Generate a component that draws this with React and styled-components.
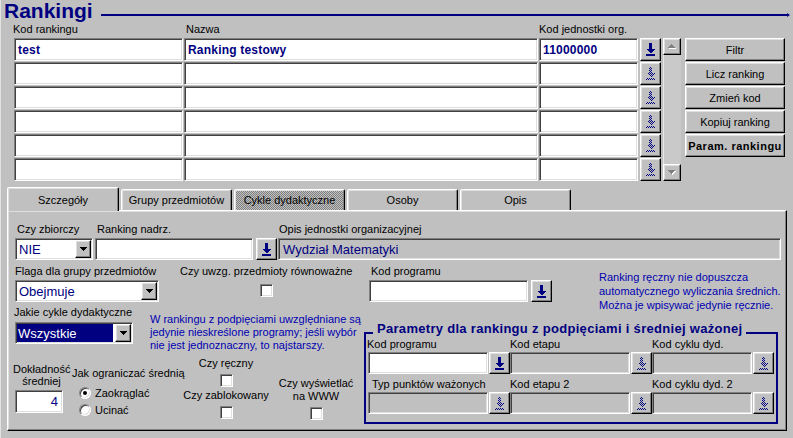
import React, { useId } from "react";
import styled, { createGlobalStyle, css } from "styled-components";

const NAVY = "#000080";
const BLUE = "#0000b0";
const FACE = "#c0c0c0";
const FONT = `"Liberation Sans", Arial, sans-serif`;

const GlobalStyle = createGlobalStyle`
  html, body { margin: 0; padding: 0; background: ${FACE}; }
  body { font-family: ${FONT}; font-size: 11px; color: #000; }
  * { box-sizing: border-box; }
`;

const raised = css`
  background: ${FACE};
  border-style: solid;
  border-width: 1px;
  border-color: #fff #000 #000 #fff;
  box-shadow: inset -1px -1px #808080, inset 1px 1px #dfdfdf;
`;

const sunken = css`
  border-style: solid;
  border-width: 1px;
  border-color: #808080 #fff #fff #808080;
  box-shadow: inset 1px 1px #404040, inset -1px -1px #dfdfdf;
`;

const Window = styled.div`
  width: 793px;
  height: 438px;
  overflow: hidden;
  background: ${FACE};
  box-shadow: inset 1px 0 #e2e2e2;
`;

/* ---------- header ---------- */
const Header = styled.header`
  display: flex;
  align-items: flex-start;
  height: 23px;
  padding-left: 4px;
`;

const Title = styled.h1`
  margin: 0;
  font: 700 21px/22px ${FONT};
  color: ${NAVY};
`;

const HeaderRule = styled.div`
  flex: 1;
  height: 2px;
  margin: 14px 6px 0 8px;
  background: ${NAVY};
  position: relative;
  &::after {
    content: "";
    position: absolute;
    right: -3px;
    top: -1px;
    border-left: 3px solid ${NAVY};
    border-top: 2px solid transparent;
    border-bottom: 2px solid transparent;
  }
`;

/* ---------- top records ---------- */
const TopSection = styled.section`
  display: flex;
  align-items: flex-start;
  padding-left: 14px;
`;

const RecordGrid = styled.div`
  display: grid;
  grid-template-columns: 169px 354px 99px 22px;
  grid-template-rows: 14px repeat(6, 23px);
  column-gap: 1px;
  row-gap: 1px;
`;

const ColLabel = styled.div`
  font-size: 11px;
  line-height: 13px;
  white-space: nowrap;
  margin-left: ${(p) => p.$ml || 0}px;
`;

const GridCell = styled.div`
  ${sunken};
  background: #fff;
  display: flex;
  align-items: center;
  padding-left: 3px;
  font: 700 12px ${FONT};
  letter-spacing: 0.2px;
  color: ${NAVY};
  white-space: nowrap;
  overflow: hidden;
`;

const ArrowBtn = styled.div`
  ${raised};
  flex: none;
  width: 21px;
  height: ${(p) => p.$h || 22}px;
  margin-left: ${(p) => p.$ml || 0}px;
  display: flex;
  align-items: center;
  justify-content: center;
`;

const ScrollBar = styled.div`
  display: flex;
  flex-direction: column;
  width: 18px;
  height: 143px;
  margin: 15px 0 0 2px;
`;

const ScrollBtn = styled.div`
  ${raised};
  height: 17px;
  display: flex;
  align-items: center;
  justify-content: center;
`;

const ScrollTrack = styled.div`
  flex: 1;
  background: #c9c9c9;
  box-shadow: inset 1px 0 #e6e6e6;
`;

const ActionColumn = styled.div`
  display: flex;
  flex-direction: column;
  gap: 1px;
  width: 100px;
  margin: 15px 0 0 4px;
`;

const ActionButton = styled.button`
  ${raised};
  appearance: none;
  height: 23px;
  width: 100px;
  padding: 0;
  font: ${(p) => (p.$bold ? 700 : 400)} 11px ${FONT};
  letter-spacing: ${(p) => (p.$bold ? "0.5px" : "0")};
  color: #000;
  cursor: default;
`;

/* ---------- tabs ---------- */
const TabsArea = styled.section`
  margin-top: 6px;
`;

const TabStrip = styled.div`
  display: flex;
  align-items: flex-end;
  height: 23px;
  padding-left: 7px;
  position: relative;
  z-index: 1;
`;

const Tab = styled.div`
  flex: none;
  width: ${(p) => (p.$active ? 112 : 111)}px;
  height: ${(p) => (p.$active ? 24 : 21)}px;
  margin-right: 2px;
  margin-bottom: ${(p) => (p.$active ? -1 : 0)}px;
  display: flex;
  align-items: center;
  justify-content: center;
  font-size: 11px;
  white-space: nowrap;
  border-style: solid;
  border-width: 1px 1px 0 1px;
  border-color: #fff #000 transparent #fff;
  border-radius: 2px 2px 0 0;
  box-shadow: inset -1px 0 #808080, inset 1px 1px #dfdfdf;
  background: ${(p) =>
    p.$dither
      ? `repeating-conic-gradient(#808080 0% 25%, ${FACE} 0% 50%) 0 0 / 2px 2px`
      : FACE};
`;

const Panel = styled.div`
  margin-left: 7px;
  width: 780px;
  height: 221px;
  border-style: solid;
  border-width: 1px;
  border-color: #fff #000 #000 #fff;
  box-shadow: inset -1px -1px #808080, inset 1px 1px #dfdfdf;
  padding: 12px 0 0 5px;
`;

/* ---------- form parts ---------- */
const Row = styled.div`
  display: flex;
  align-items: flex-start;
  margin-top: ${(p) => p.$mt || 0}px;
`;

const Field = styled.div`
  display: flex;
  flex-direction: column;
  flex: none;
  margin-left: ${(p) => p.$ml || 0}px;
  margin-top: ${(p) => p.$mt || 0}px;
  align-items: ${(p) => (p.$center ? "center" : "stretch")};
  width: ${(p) => (p.$w ? `${p.$w}px` : "auto")};
`;

const Label = styled.div`
  font-size: 11px;
  line-height: ${(p) => p.$lh || 13}px;
  white-space: nowrap;
  margin-left: ${(p) => p.$ml || 0}px;
  margin-top: ${(p) => p.$mt || 0}px;
  margin-bottom: ${(p) => (p.$mb ?? 2)}px;
  text-align: ${(p) => (p.$center ? "center" : "left")};
`;

const Combo = styled.div`
  display: flex;
  align-items: flex-start;
`;

const Input = styled.div`
  ${sunken};
  flex: none;
  width: ${(p) => p.$w}px;
  height: ${(p) => p.$h || 22}px;
  margin-left: ${(p) => p.$ml || 0}px;
  background: ${(p) => (p.$gray ? FACE : "#fff")};
  display: flex;
  align-items: center;
  justify-content: ${(p) => (p.$right ? "flex-end" : "flex-start")};
  padding: 0 4px;
  font: 400 13px ${FONT};
  color: ${NAVY};
  white-space: nowrap;
  overflow: hidden;
`;

const SelectBox = styled.div`
  ${sunken};
  flex: none;
  width: ${(p) => p.$w}px;
  height: 22px;
  margin-left: ${(p) => p.$ml || 0}px;
  background: #fff;
  padding: 1px;
  display: flex;
  align-items: stretch;
`;

const SelectValue = styled.div`
  flex: 1;
  display: flex;
  align-items: center;
  margin-right: 2px;
  padding-left: ${(p) => (p.$selected ? 1 : 2)}px;
  font: 400 13px ${FONT};
  color: ${(p) => (p.$selected ? "#fff" : NAVY)};
  background: ${(p) => (p.$selected ? NAVY : "transparent")};
  white-space: nowrap;
  overflow: hidden;
`;

const SelectBtn = styled.div`
  ${raised};
  width: 16px;
  display: flex;
  align-items: center;
  justify-content: center;
`;

const CheckBox = styled.div`
  ${sunken};
  flex: none;
  width: 13px;
  height: 13px;
  background: #fff;
`;

const RadioRow = styled.label`
  display: flex;
  align-items: center;
  height: 17px;
  margin-left: 7px;
  gap: 4px;
  font-size: 11px;
`;

const Radio = styled.span`
  flex: none;
  position: relative;
  width: 12px;
  height: 12px;
  border-radius: 50%;
  background: #fff;
  border: 1px solid;
  border-color: #808080 #fff #fff #808080;
  box-shadow: inset 1px 1px #404040, inset -1px -1px #dfdfdf;
  ${(p) =>
    p.$checked &&
    css`
      &::after {
        content: "";
        position: absolute;
        left: 3px;
        top: 3px;
        width: 4px;
        height: 4px;
        border-radius: 50%;
        background: #000;
      }
    `}
`;

const Note = styled.p`
  margin: ${(p) => p.$mt || 0}px 0 0 ${(p) => p.$ml || 0}px;
  font-size: 11px;
  line-height: ${(p) => p.$lh || 13}px;
  color: ${BLUE};
  white-space: nowrap;
`;

const Lower = styled.div`
  display: flex;
  align-items: flex-start;
`;

const LeftCol = styled.div`
  width: 350px;
  flex: none;
`;

const RightCol = styled.div`
  flex: 1;
`;

const GroupBox = styled.div`
  position: relative;
  width: 414px;
  height: 92px;
  margin: 20px 0 0 1px;
  border: 2px solid ${NAVY};
  padding: 4px 0 0 2px;
`;

const GroupTitle = styled.div`
  position: absolute;
  top: -13px;
  left: 7px;
  padding: 0 4px;
  background: ${FACE};
  font: 700 13px/15px ${FONT};
  letter-spacing: 0.3px;
  color: ${NAVY};
  white-space: nowrap;
`;

/* ---------- icons ---------- */
function DropIcon({ disabled }) {
  const id = "dither" + useId().replace(/[^a-zA-Z0-9]/g, "");
  const fill = disabled ? `url(#${id})` : NAVY;
  return (
    <svg width="9" height="13" viewBox="0 0 9 13" shapeRendering="crispEdges" aria-hidden="true">
      {disabled && (
        <defs>
          <pattern id={id} width="2" height="2" patternUnits="userSpaceOnUse">
            <rect width="1" height="1" fill={NAVY} />
            <rect x="1" y="1" width="1" height="1" fill={NAVY} />
          </pattern>
        </defs>
      )}
      <path d="M3 0h3v6h3l-4.5 4.5L0 6h3z" fill={fill} />
      <rect x="0" y="11" width="9" height="2" fill={fill} />
    </svg>
  );
}

function Caret() {
  return (
    <svg width="7" height="4" viewBox="0 0 7 4" shapeRendering="crispEdges" aria-hidden="true">
      <path d="M0 0H7V1H6V2H5V3H4V4H3V3H2V2H1V1H0Z" fill="#000" />
    </svg>
  );
}

function ScrollArrow({ down }) {
  const d = down
    ? "M0 0H7V1H6V2H5V3H4V4H3V3H2V2H1V1H0Z"
    : "M3 0H4V1H5V2H6V3H7V4H0V3H1V2H2V1H3Z";
  return (
    <svg width="8" height="5" viewBox="0 0 8 5" shapeRendering="crispEdges" aria-hidden="true">
      <path d={d} fill="#fff" transform="translate(1 1)" />
      <path d={d} fill="#808080" />
    </svg>
  );
}

function Select({ w, ml, value, selected }) {
  return (
    <SelectBox $w={w} $ml={ml}>
      <SelectValue $selected={selected}>{value}</SelectValue>
      <SelectBtn>
        <Caret />
      </SelectBtn>
    </SelectBox>
  );
}

const rows = [
  { kod: "test", nazwa: "Ranking testowy", jedn: "11000000", active: true },
  {}, {}, {}, {}, {},
];

export default function App() {
  return (
    <>
      <GlobalStyle />
      <Window>
        <Header>
          <Title>Rankingi</Title>
          <HeaderRule />
        </Header>

        <TopSection>
          <RecordGrid>
            <ColLabel $ml={-1}>Kod rankingu</ColLabel>
            <ColLabel $ml={2}>Nazwa</ColLabel>
            <ColLabel>Kod jednostki org.</ColLabel>
            <div />
            {rows.map((r, i) => (
              <React.Fragment key={i}>
                <GridCell>{r.kod}</GridCell>
                <GridCell>{r.nazwa}</GridCell>
                <GridCell>{r.jedn}</GridCell>
                <ArrowBtn $h={23} $ml={1}>
                  <DropIcon disabled={!r.active} />
                </ArrowBtn>
              </React.Fragment>
            ))}
          </RecordGrid>

          <ScrollBar>
            <ScrollBtn>
              <ScrollArrow />
            </ScrollBtn>
            <ScrollTrack />
            <ScrollBtn>
              <ScrollArrow down />
            </ScrollBtn>
          </ScrollBar>

          <ActionColumn>
            <ActionButton>Filtr</ActionButton>
            <ActionButton>Licz ranking</ActionButton>
            <ActionButton>Zmień kod</ActionButton>
            <ActionButton>Kopiuj ranking</ActionButton>
            <ActionButton $bold>Param. rankingu</ActionButton>
          </ActionColumn>
        </TopSection>

        <TabsArea>
          <TabStrip>
            <Tab $active>Szczegóły</Tab>
            <Tab>Grupy przedmiotów</Tab>
            <Tab $dither>Cykle dydaktyczne</Tab>
            <Tab>Osoby</Tab>
            <Tab>Opis</Tab>
          </TabStrip>

          <Panel>
            <Row>
              <Field $ml={2}>
                <Label $ml={2}>Czy zbiorczy</Label>
                <Select w={78} value="NIE" />
              </Field>
              <Field $ml={2}>
                <Label $ml={2}>Ranking nadrz.</Label>
                <Combo>
                  <Input $w={158} />
                  <ArrowBtn $ml={3}>
                    <DropIcon />
                  </ArrowBtn>
                </Combo>
              </Field>
              <Field $ml={1}>
                <Label $ml={1}>Opis jednostki organizacyjnej</Label>
                <Input $w={503} $gray>
                  Wydział Matematyki
                </Input>
              </Field>
            </Row>

            <Lower>
              <LeftCol>
                <Row $mt={5}>
                  <Field $ml={2}>
                    <Label>Flaga dla grupy przedmiotów</Label>
                    <Select w={144} value="Obejmuje" />
                  </Field>
                  <Field $ml={21} $center>
                    <Label $mb={6}>Czy uwzg. przedmioty równoważne</Label>
                    <CheckBox />
                  </Field>
                </Row>

                <Row $mt={4}>
                  <Field $ml={2}>
                    <Label $ml={-1} $mb={3}>Jakie cykle dydaktyczne</Label>
                    <Select w={118} value="Wszystkie" selected />
                  </Field>
                  <Note $ml={17} $mt={7}>
                    W rankingu z podpięciami uwzględniane są
                    <br />
                    jedynie nieskreślone programy; jeśli wybór
                    <br />
                    nie jest jednoznaczny, to najstarszy.
                  </Note>
                </Row>

                <Row $mt={5}>
                  <Field $w={57} $mt={6}>
                    <Label $lh={12} $center $mb={3}>
                      Dokładność
                      <br />
                      średniej
                    </Label>
                    <Input $w={48} $h={23} $ml={2} $right>
                      4
                    </Input>
                  </Field>
                  <Field $w={111} $ml={2} $mt={10}>
                    <Label $mb={4}>Jak ograniczać średnią</Label>
                    <RadioRow>
                      <Radio $checked />
                      Zaokrąglać
                    </RadioRow>
                    <RadioRow>
                      <Radio />
                      Ucinać
                    </RadioRow>
                  </Field>
                  <Field $w={86} $center>
                    <Label $mb={4}>Czy ręczny</Label>
                    <CheckBox />
                    <Label $mt={2} $mb={4}>Czy zablokowany</Label>
                    <CheckBox />
                  </Field>
                  <Field $w={80} $ml={7} $mt={20} $center>
                    <Label $center $mb={4}>
                      Czy wyświetlać
                      <br />
                      na WWW
                    </Label>
                    <CheckBox />
                  </Field>
                </Row>
              </LeftCol>

              <RightCol>
                <Row $mt={5}>
                  <Field $ml={6}>
                    <Label $ml={2}>Kod programu</Label>
                    <Combo>
                      <Input $w={159} />
                      <ArrowBtn $ml={3}>
                        <DropIcon />
                      </ArrowBtn>
                    </Combo>
                  </Field>
                  <Note $ml={47} $mt={5} $lh={14}>
                    Ranking ręczny nie dopuszcza
                    <br />
                    automatycznego wyliczania średnich.
                    <br />
                    Można je wpisywać jedynie ręcznie.
                  </Note>
                </Row>

                <GroupBox>
                  <GroupTitle>Parametry dla rankingu z podpięciami i średniej ważonej</GroupTitle>
                  <Row>
                    <Field>
                      <Label $ml={-1} $mb={1}>Kod programu</Label>
                      <Combo>
                        <Input $w={120} />
                        <ArrowBtn $ml={1}>
                          <DropIcon />
                        </ArrowBtn>
                      </Combo>
                    </Field>
                    <Field>
                      <Label $mb={1}>Kod etapu</Label>
                      <Combo>
                        <Input $w={120} $gray />
                        <ArrowBtn $ml={1}>
                          <DropIcon disabled />
                        </ArrowBtn>
                      </Combo>
                    </Field>
                    <Field>
                      <Label $mb={1}>Kod cyklu dyd.</Label>
                      <Combo>
                        <Input $w={100} $gray />
                        <ArrowBtn $ml={1}>
                          <DropIcon disabled />
                        </ArrowBtn>
                      </Combo>
                    </Field>
                  </Row>
                  <Row $mt={4}>
                    <Field>
                      <Label $ml={4} $mb={1}>Typ punktów ważonych</Label>
                      <Combo>
                        <Input $w={120} $gray />
                        <ArrowBtn $ml={1}>
                          <DropIcon disabled />
                        </ArrowBtn>
                      </Combo>
                    </Field>
                    <Field>
                      <Label $mb={1}>Kod etapu 2</Label>
                      <Combo>
                        <Input $w={120} $gray />
                        <ArrowBtn $ml={1}>
                          <DropIcon disabled />
                        </ArrowBtn>
                      </Combo>
                    </Field>
                    <Field>
                      <Label $mb={1}>Kod cyklu dyd. 2</Label>
                      <Combo>
                        <Input $w={100} $gray />
                        <ArrowBtn $ml={1}>
                          <DropIcon disabled />
                        </ArrowBtn>
                      </Combo>
                    </Field>
                  </Row>
                </GroupBox>
              </RightCol>
            </Lower>
          </Panel>
        </TabsArea>
      </Window>
    </>
  );
}
